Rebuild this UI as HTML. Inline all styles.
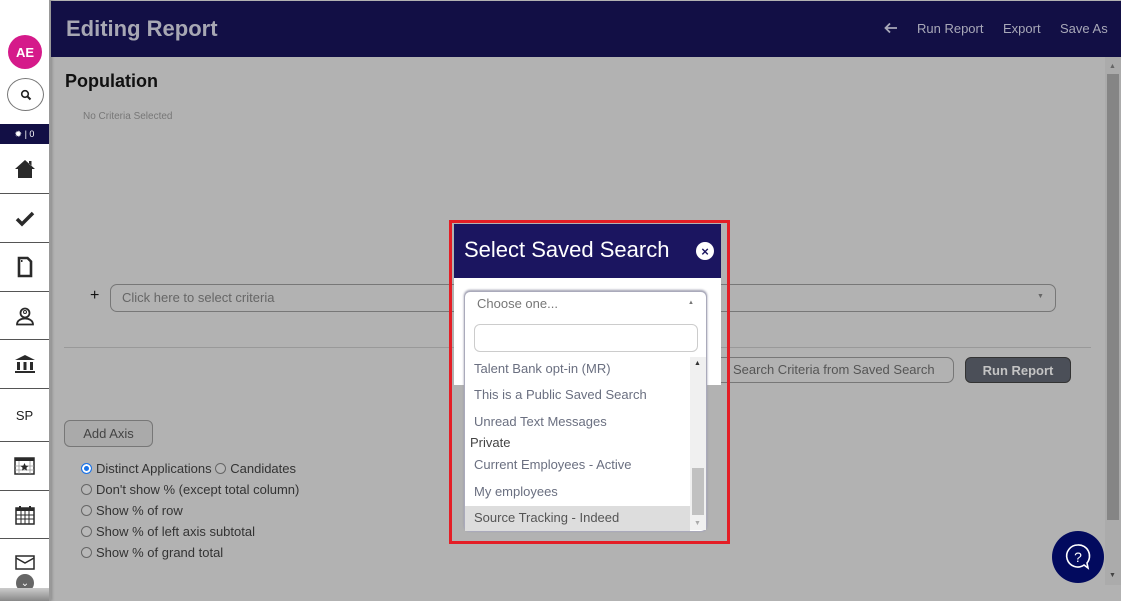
<!DOCTYPE html>
<html><head><meta charset="utf-8"><style>
*{box-sizing:border-box;margin:0;padding:0}
body{width:1121px;height:601px;overflow:hidden;background:#b2b2b2;font-family:"Liberation Sans",sans-serif;position:relative}
.a{position:absolute}
.side{left:0;top:0;width:51px;height:601px;background:#fff;border-right:2px solid #999;box-shadow:1px 0 3px #888}
.hd{left:51px;top:1px;width:1070px;height:56px;background:#120f45}
.line{height:1px;background:#555;left:0;width:49px}
.ic{left:0;width:49px;display:flex;align-items:center;justify-content:center}
.t{color:#444;font-size:13px}
.radio{width:11px;height:11px;border:1px solid #666;border-radius:50%;display:inline-block;vertical-align:-1px;margin-right:4px;background:#b8b8b8}
.li{left:474px;font-size:13px;color:#6a6f80}
</style></head><body>
<div class="a side"></div>
<div class="a" style="left:8px;top:35px;width:34px;height:34px;border-radius:50%;background:#d51a8a;color:#fff;font-weight:bold;font-size:13px;display:flex;align-items:center;justify-content:center">AE</div>
<div class="a" style="left:7px;top:78px;width:37px;height:33px;border:1px solid #777;border-radius:50%;display:flex;align-items:center;justify-content:center">
<svg width="12" height="12" viewBox="0 0 12 12"><circle cx="5" cy="5" r="3.3" fill="none" stroke="#222" stroke-width="1.6"/><path d="M7.5 7.5L10.5 10.5" stroke="#222" stroke-width="2"/></svg></div>
<div class="a" style="left:0;top:124px;width:49px;height:20px;background:#120f45;color:#fff;font-size:9px;display:flex;align-items:center;justify-content:center">✹ | 0</div>
<div class="a ic" style="top:144px;height:49px"><svg width="22" height="22" viewBox="0 0 22 22"><path d="M11 2L1 11h3v9h14v-9h3z M15 3h2.5v5l-2.5-2z" fill="#2a2a2a"/></svg></div>
<div class="a line" style="top:193px"></div>
<div class="a ic" style="top:194px;height:49px"><svg width="20" height="16" viewBox="0 0 20 16"><path d="M2 8l5 5L18 2" fill="none" stroke="#2a2a2a" stroke-width="3.5"/></svg></div>
<div class="a line" style="top:242px"></div>
<div class="a ic" style="top:243px;height:48px"><svg width="16" height="22" viewBox="0 0 16 22"><path d="M2 2h8.5l3.5 3.5v14.5h-12z" fill="#fff" stroke="#2a2a2a" stroke-width="2.6"/><rect x="4" y="4" width="1.5" height="2" fill="#2a2a2a"/></svg></div>
<div class="a line" style="top:291px"></div>
<div class="a ic" style="top:292px;height:47px"><svg width="20" height="20" viewBox="0 0 20 20"><circle cx="10" cy="7" r="4.5" fill="none" stroke="#2a2a2a" stroke-width="1.8"/><circle cx="10" cy="6" r="1.5" fill="none" stroke="#2a2a2a" stroke-width="1"/><path d="M2 18.5c0-4 4-6 8-6s8 2 8 6z" fill="none" stroke="#2a2a2a" stroke-width="1.8"/></svg></div>
<div class="a line" style="top:339px"></div>
<div class="a ic" style="top:340px;height:48px"><svg width="22" height="20" viewBox="0 0 22 20"><path d="M11 1L1 6h20z M3 8h3v8H3z M9.5 8h3v8h-3z M16 8h3v8h-3z M1 17h20v2H1z" fill="#2a2a2a"/></svg></div>
<div class="a line" style="top:388px"></div>
<div class="a ic" style="top:389px;height:53px;font-size:13px;color:#222">SP</div>
<div class="a line" style="top:441px"></div>
<div class="a ic" style="top:442px;height:48px"><svg width="21" height="18" viewBox="0 0 21 18"><rect x="1" y="1" width="19" height="16" fill="#fff" stroke="#2a2a2a" stroke-width="1.5"/><rect x="1" y="1" width="19" height="3" fill="#2a2a2a"/><path d="M1 9h19M1 13h19M5 4v13M16 4v13" stroke="#999" stroke-width=".8"/><path d="M10.5 6l1.2 2.6 2.8.3-2.1 1.9.6 2.8-2.5-1.5-2.5 1.5.6-2.8-2.1-1.9 2.8-.3z" fill="#2a2a2a"/></svg></div>
<div class="a line" style="top:490px"></div>
<div class="a ic" style="top:491px;height:47px"><svg width="20" height="20" viewBox="0 0 20 20"><rect x="1" y="3" width="18" height="16" fill="none" stroke="#2a2a2a" stroke-width="1.5"/><rect x="1" y="3" width="18" height="3" fill="#2a2a2a"/><path d="M1 10h18M1 14h18M6 6v13M10 6v13M14 6v13" stroke="#2a2a2a"/><path d="M5 1v4M15 1v4" stroke="#2a2a2a" stroke-width="2"/></svg></div>
<div class="a line" style="top:538px"></div>
<div class="a ic" style="top:550px;height:25px"><svg width="20" height="15" viewBox="0 0 20 15"><rect x="1" y="1" width="18" height="13" fill="#fff" stroke="#2a2a2a" stroke-width="1.5"/><path d="M1 3l9 5 9-5" fill="none" stroke="#2a2a2a" stroke-width="1.5"/></svg></div>
<div class="a" style="left:16px;top:574px;width:18px;height:18px;border-radius:50%;background:#666;color:#fff;font-size:10px;display:flex;align-items:center;justify-content:center">⌄</div>
<div class="a" style="left:0;top:588px;width:49px;height:13px;background:linear-gradient(#ccc,#888)"></div>

<div class="a hd"></div>
<div class="a" style="left:66px;top:16px;font-size:22px;font-weight:bold;color:#a7a7b3">Editing Report</div>
<svg class="a" style="left:884px;top:22px" width="14" height="12" viewBox="0 0 14 12"><path d="M13 6H2M6 1.5L1.5 6 6 10.5" fill="none" stroke="#a8a8b8" stroke-width="1.8"/></svg>
<div class="a" style="left:917px;top:21px;font-size:13px;color:#a8a8b8">Run Report</div>
<div class="a" style="left:1003px;top:21px;font-size:13px;color:#a8a8b8">Export</div>
<div class="a" style="left:1060px;top:21px;font-size:13px;color:#a8a8b8">Save As</div>

<div class="a" style="left:1105px;top:57px;width:16px;height:528px;background:#ababab"></div>
<div class="a" style="left:1107px;top:74px;width:12px;height:446px;background:#858585"></div>
<div class="a" style="left:1109px;top:63px;font-size:7px;color:#666">▲</div>
<div class="a" style="left:1109px;top:572px;font-size:7px;color:#444">▼</div>

<div class="a" style="left:65px;top:71px;font-size:18px;font-weight:bold;color:#111">Population</div>
<div class="a" style="left:83px;top:111px;font-size:10px;color:#777">No Criteria Selected</div>
<div class="a" style="left:90px;top:287px;font-size:16px;color:#111">+</div>
<div class="a" style="left:110px;top:284px;width:946px;height:28px;border:1px solid #777;border-radius:7px"></div>
<div class="a t" style="left:122px;top:290px;color:#666">Click here to select criteria</div>
<div class="a" style="left:1037px;top:293px;font-size:7px;color:#666">▼</div>
<div class="a" style="left:64px;top:347px;width:1027px;height:1px;background:#999"></div>
<div class="a" style="left:700px;top:357px;width:254px;height:26px;border:1px solid #777;border-radius:7px"></div>
<div class="a t" style="left:733px;top:362px;color:#555">Search Criteria from Saved Search</div>
<div class="a" style="left:965px;top:357px;width:106px;height:26px;background:#4b4f58;border:1px solid #333;border-radius:6px;color:#c4c4c4;font-size:13px;font-weight:bold;display:flex;align-items:center;justify-content:center">Run Report</div>
<div class="a" style="left:64px;top:420px;width:89px;height:27px;border:1px solid #777;border-radius:6px;background:#aaa;color:#444;font-size:13px;display:flex;align-items:center;justify-content:center">Add Axis</div>
<div class="a t" style="left:81px;top:461px;color:#333"><span class="radio" style="background:#1a73e8;box-shadow:inset 0 0 0 2px #fff;border-color:#1a73e8"></span>Distinct Applications <span class="radio"></span>Candidates</div>
<div class="a t" style="left:81px;top:482px;color:#333"><span class="radio"></span>Don't show % (except total column)</div>
<div class="a t" style="left:81px;top:503px;color:#333"><span class="radio"></span>Show % of row</div>
<div class="a t" style="left:81px;top:524px;color:#333"><span class="radio"></span>Show % of left axis subtotal</div>
<div class="a t" style="left:81px;top:545px;color:#333"><span class="radio"></span>Show % of grand total</div>

<div class="a" style="left:1052px;top:531px;width:52px;height:52px;border-radius:50%;background:#020a5e;display:flex;align-items:center;justify-content:center">
<svg width="30" height="30" viewBox="0 0 30 30"><path d="M15 3a11 11 0 1 0 6 20l4 3-1-5A11 11 0 0 0 15 3z" fill="none" stroke="#fff" stroke-width="1.6"/><text x="15" y="20" text-anchor="middle" font-size="14" fill="#fff" font-family="Liberation Sans">?</text></svg></div>

<div class="a" style="left:449px;top:220px;width:281px;height:324px;border:3px solid #e41e26"></div>
<div class="a" style="left:454px;top:224px;width:267px;height:161px;background:#fff"></div>
<div class="a" style="left:454px;top:224px;width:267px;height:54px;background:#1b1560"></div>
<div class="a" style="left:464px;top:237px;font-size:22px;color:#fff">Select Saved Search</div>
<div class="a" style="left:696px;top:242px;width:18px;height:18px;border-radius:50%;background:#fff;color:#1b1560;font-size:13px;font-weight:bold;display:flex;align-items:center;justify-content:center">×</div>
<div class="a" style="left:464px;top:291px;width:243px;height:241px;background:#fff;border:1px solid #aab;border-radius:6px;box-shadow:0 -1px 2px #99a"></div>
<div class="a t" style="left:477px;top:296px;color:#777">Choose one...</div>
<div class="a" style="left:688px;top:300px;font-size:6px;color:#777">▲</div>
<div class="a" style="left:474px;top:324px;width:224px;height:28px;border:1px solid #ccc;border-radius:6px"></div>
<div class="a" style="left:690px;top:357px;width:16px;height:173px;background:#f0f0f0"></div>
<div class="a" style="left:692px;top:468px;width:12px;height:47px;background:#c1c1c1"></div>
<div class="a" style="left:694px;top:360px;font-size:7px;color:#333">▲</div>
<div class="a" style="left:694px;top:520px;font-size:7px;color:#aaa">▼</div>
<div class="a li" style="top:361px">Talent Bank opt-in (MR)</div>
<div class="a li" style="top:387px">This is a Public Saved Search</div>
<div class="a li" style="top:414px">Unread Text Messages</div>
<div class="a" style="left:470px;top:435px;font-size:13px;color:#444">Private</div>
<div class="a li" style="top:457px">Current Employees - Active</div>
<div class="a li" style="top:484px">My employees</div>
<div class="a" style="left:465px;top:506px;width:225px;height:25px;background:#ddd"></div>
<div class="a li" style="top:510px;color:#555">Source Tracking - Indeed</div>
</body></html>
